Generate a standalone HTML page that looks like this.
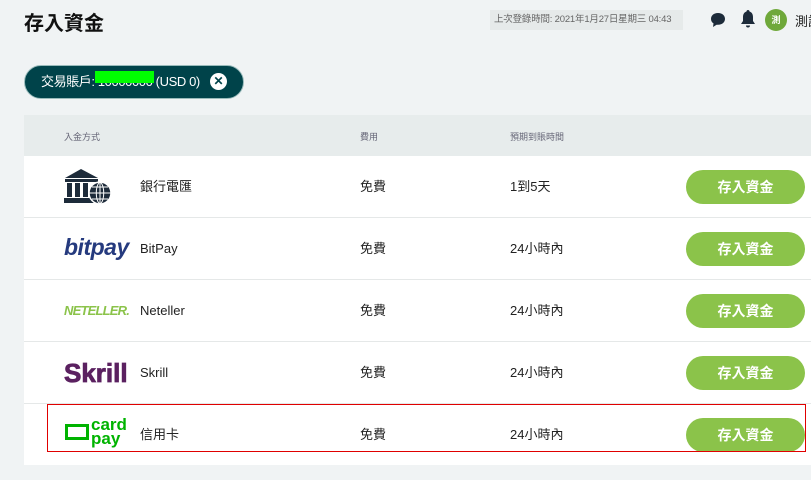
<!DOCTYPE html>
<html><head><meta charset="utf-8"><style>
*{margin:0;padding:0;box-sizing:border-box}
body{width:811px;height:480px;overflow:hidden;background:#f0f3f4;font-family:"Liberation Sans","Noto Sans CJK TC",sans-serif;color:#222;position:relative}
.abs{position:absolute}
h1{position:absolute;left:24px;top:7px;font-size:20px;font-weight:bold;color:#111}
.login{left:490px;top:10px;width:193px;height:20px;background:#e6eaea;font-size:9.5px;color:#666;line-height:20px;padding-left:4px;white-space:nowrap;letter-spacing:-0.2px}
.pill{left:24px;top:65px;width:220px;height:34px;border-radius:17px;background:#00434a;border:1px solid #9bb;color:#fff;font-size:13px;line-height:32px;padding-left:16px;white-space:nowrap;letter-spacing:-0.4px}
.green{left:95px;top:71px;width:59px;height:12px;background:#00ff00}
.x{left:210px;top:73px;width:17px;height:17px;border-radius:50%;background:#fff;color:#00434a;font-size:12px;font-weight:bold;text-align:center;line-height:17px}
.table{left:24px;top:115px;width:800px;height:350px;background:#fff}
.head{left:24px;top:115px;width:800px;height:41px;background:#e7ecec;font-size:9px;color:#667}
.row{position:absolute;left:24px;width:800px;height:62px;border-bottom:1.5px solid #e5e8e8;font-size:13px}
.row span{position:absolute;top:0;line-height:62px;white-space:nowrap}
.btn{position:absolute;left:662px;top:14px;width:119px;height:34px;border-radius:17px;background:#8bc34a;color:#fff;font-weight:bold;font-size:14px;text-align:center;line-height:34px}
</style></head><body>
<h1>存入資金</h1>
<div class="abs login">上次登錄時間: 2021年1月27日星期三 04:43</div>
<svg class="abs" style="left:709px;top:11px" width="18" height="18" viewBox="0 0 18 18"><path d="M9 2C4.6 2 2 4.7 2 8c0 2 1 3.5 2.5 4.4L4 16l3.6-2.3c.5.1 1 .1 1.4.1 4.4 0 7-2.7 7-5.9S13.4 2 9 2z" fill="#1d2b3a"/></svg>
<svg class="abs" style="left:739px;top:9px" width="18" height="20" viewBox="0 0 18 20"><path d="M9 1c-1 0-1.5.7-1.5 1.5C5 3.3 4 5.5 4 8v4l-2 3h14l-2-3V8c0-2.5-1-4.7-3.5-5.5C10.5 1.7 10 1 9 1zM7 16.5a2 2 0 004 0z" fill="#1d2b3a"/></svg>
<div class="abs" style="left:765px;top:9px;width:22px;height:22px;border-radius:50%;background:#6fa83a;color:#fff;font-size:9px;text-align:center;line-height:22px;font-weight:bold">測</div>
<div class="abs" style="left:795px;top:11px;font-size:13px;white-space:nowrap">測試</div>
<div class="abs pill">交易賬戶: 10000000 (USD 0)</div>
<div class="abs green"></div>
<div class="abs x">✕</div>
<div class="abs table"></div>
<div class="abs head"><span class="abs" style="left:40px;top:15px">入金方式</span><span class="abs" style="left:336px;top:15px">費用</span><span class="abs" style="left:486px;top:15px">預期到賬時間</span></div>

<div class="row" style="top:156px">
<svg style="position:absolute;left:40px;top:13px" width="48" height="36" viewBox="0 0 48 36"><path d="M1 9L17 0l17 9z" fill="#1d2b3a"/><rect x="1" y="10" width="33" height="3" fill="#1d2b3a"/><rect x="3" y="14" width="5" height="14" fill="#1d2b3a"/><rect x="11" y="14" width="5" height="14" fill="#1d2b3a"/><rect x="19" y="14" width="5" height="14" fill="#1d2b3a"/><rect x="0" y="29" width="30" height="5" fill="#1d2b3a"/><circle cx="36" cy="24" r="11" fill="#1d2b3a" stroke="#fff" stroke-width="1.5"/><path d="M25 24h22M36 13v22M28 18h16M28 30h16M36 13c-5 3-5 19 0 22M36 13c5 3 5 19 0 22" stroke="#fff" stroke-width="1" fill="none"/></svg>
<span style="left:116px">銀行電匯</span><span style="left:336px">免費</span><span style="left:486px">1到5天</span><div class="btn">存入資金</div></div>

<div class="row" style="top:218px">
<span style="left:40px;font-size:23px;font-weight:bold;font-style:italic;color:#253a7e;letter-spacing:-0.5px;line-height:58px">bitpay</span>
<span style="left:116px">BitPay</span><span style="left:336px">免費</span><span style="left:486px">24小時內</span><div class="btn">存入資金</div></div>

<div class="row" style="top:280px">
<span style="left:40px;font-size:13px;font-weight:bold;font-style:italic;color:#8bc34a;letter-spacing:-0.8px">NETELLER.</span>
<span style="left:116px">Neteller</span><span style="left:336px">免費</span><span style="left:486px">24小時內</span><div class="btn">存入資金</div></div>

<div class="row" style="top:342px">
<span style="left:40px;font-size:26px;font-weight:900;color:#5b2160;letter-spacing:0px;-webkit-text-stroke:0.8px #5b2160">Skrill</span>
<span style="left:116px">Skrill</span><span style="left:336px">免費</span><span style="left:486px">24小時內</span><div class="btn">存入資金</div></div>

<div class="row" style="top:404px;border-bottom:none">
<div style="position:absolute;left:41px;top:20px;width:24px;height:16px;border:3px solid #00b300"></div>
<div style="position:absolute;left:67px;top:14px;font-size:17px;font-weight:bold;color:#00b300;line-height:14px">card<br>pay</div>
<span style="left:116px">信用卡</span><span style="left:336px">免費</span><span style="left:486px">24小時內</span><div class="btn">存入資金</div></div>
<div class="abs" style="left:47px;top:404px;width:759px;height:48px;border:1px solid #e00000"></div>
</body></html>
